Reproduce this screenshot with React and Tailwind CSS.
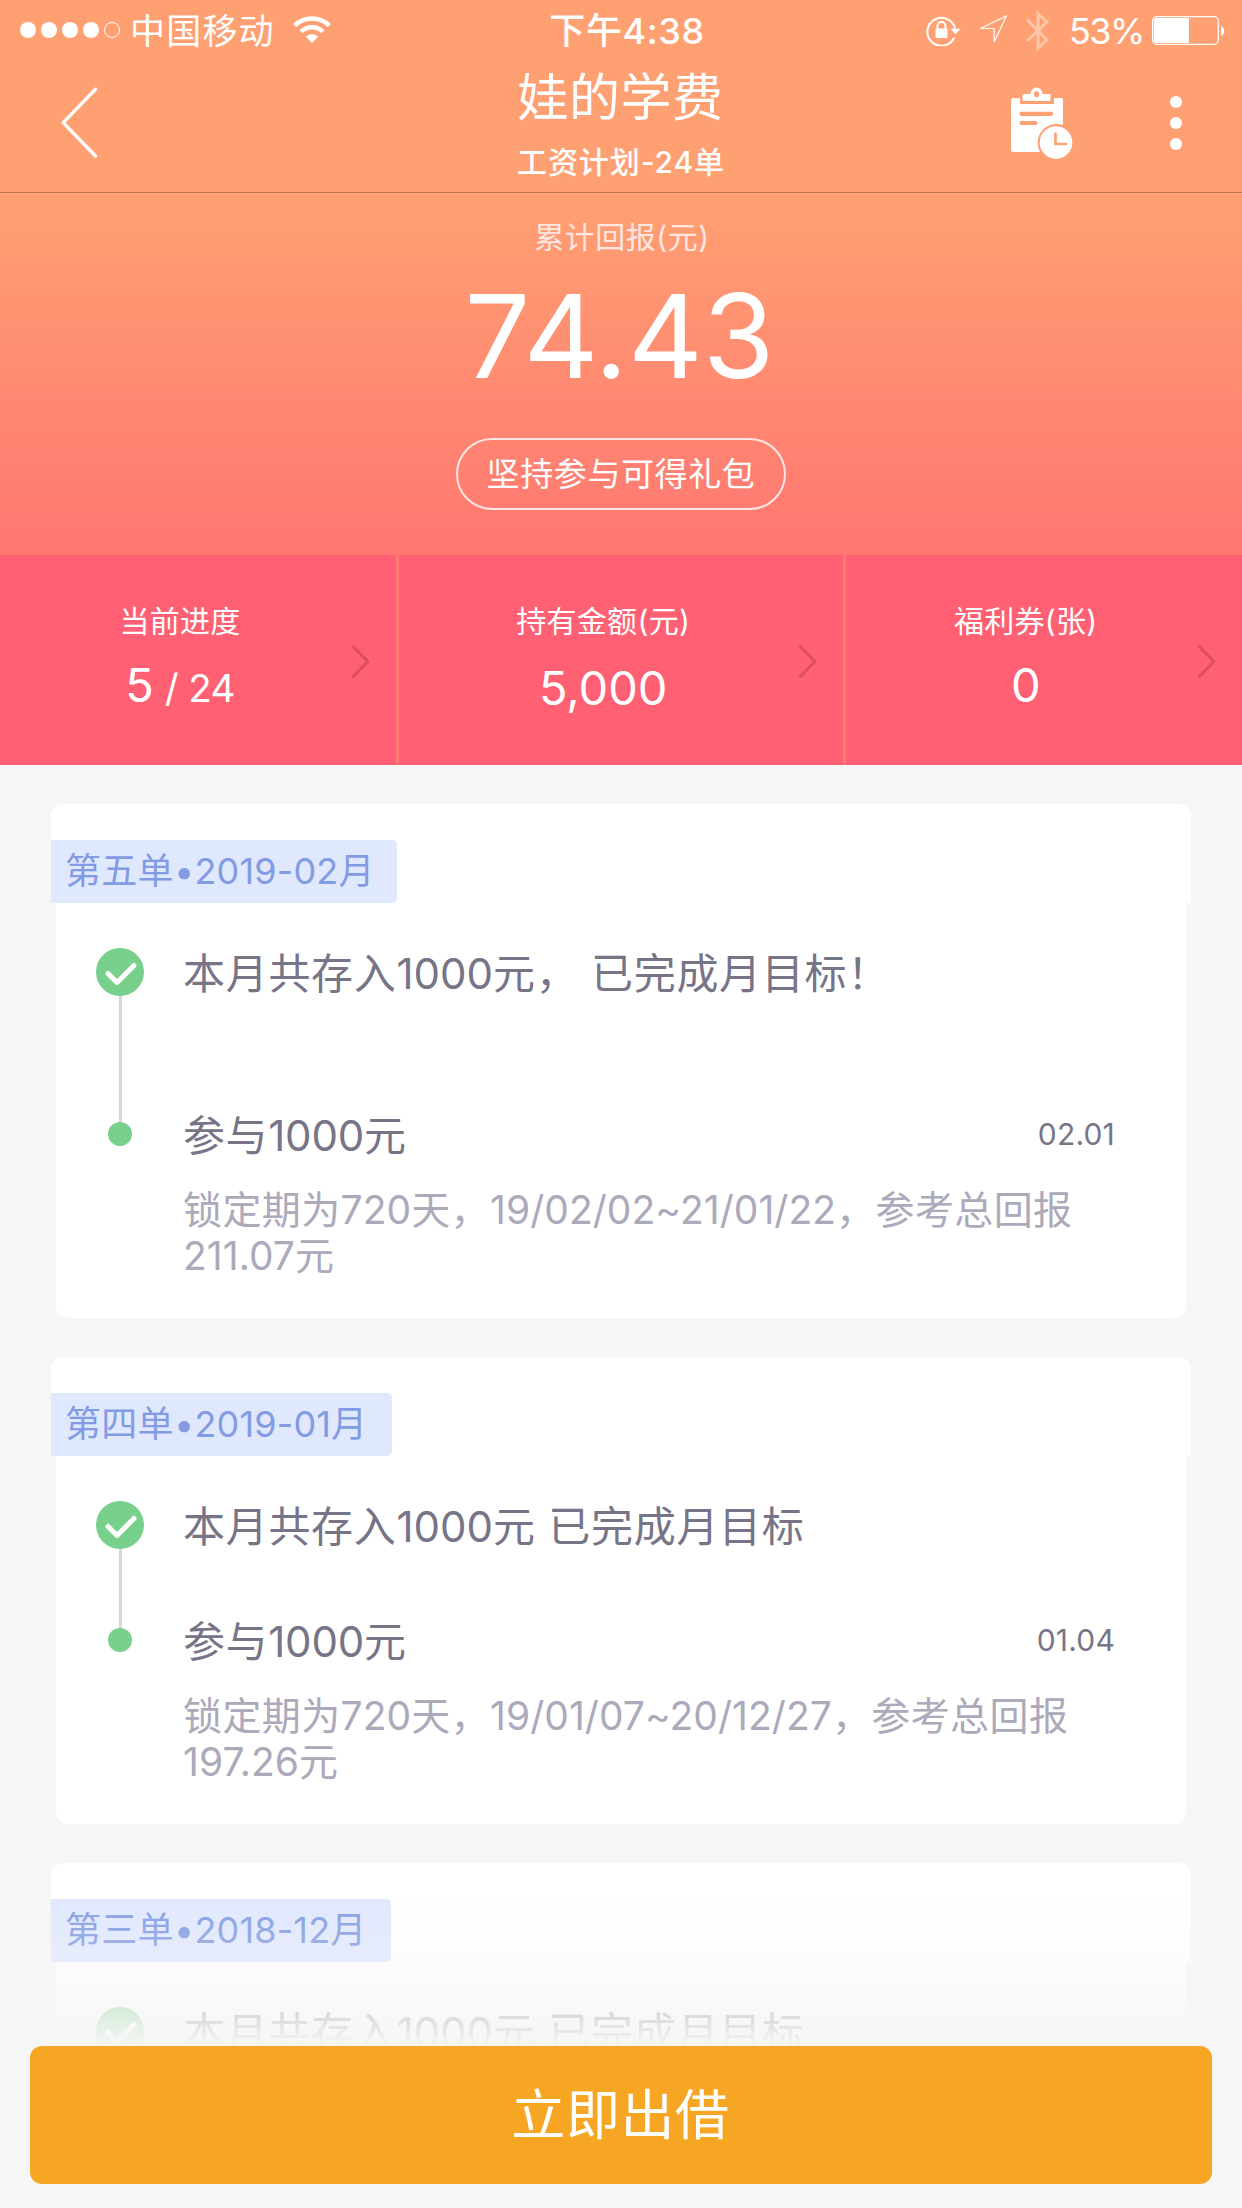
const FONT = "font-[Inter,'Noto_Sans_CJK_SC',sans-serif]";

// Sets runs of digits and their separators with their own letter spacing.
function Mixed({ text, digits }) {
  return text.split(/([0-9./~-]+)/).map((part, i) =>
    i % 2 ? (
      <span key={i} className={digits}>{part}</span>
    ) : (
      part
    )
  );
}

function StatusBar() {
  return (
    <div className="flex h-[60px] items-start text-white">
      <div className="flex w-[420px] items-start pl-5">
        <div className="mt-[22px] flex gap-[5px]">
          {[0, 1, 2, 3].map((i) => (
            <span key={i} className="size-4 rounded-full bg-white" />
          ))}
          <span className="size-4 rounded-full border border-white" />
        </div>
        <span className="mt-[6px] ml-[10px] h-[50px] text-[35px] leading-[50px] tracking-[1.2px] whitespace-nowrap">中国移动</span>
        <svg className="mt-[16px] ml-[18px]" width="38" height="28" viewBox="0 0 38 28" fill="none" stroke="#fff">
          <path d="M1.8 9.6 A24.5 24.5 0 0 1 36.2 9.6" strokeWidth="4.6" />
          <path d="M8 15.8 A15.7 15.7 0 0 1 30 15.8" strokeWidth="4.4" />
          <path d="M19 27 L12.9 20.8 A8.8 8.8 0 0 1 25.1 20.8 Z" fill="#fff" stroke="none" />
        </svg>
      </div>
      <div className="mt-[6px] h-[50px] flex-1 pl-[12px] text-center text-[36px] leading-[50px] font-medium tracking-[0.6px] whitespace-nowrap">下午4:38</div>
      <div className="flex w-[420px] items-start justify-end pr-[16px]">
        <svg className="mt-[14px]" width="35" height="32" viewBox="0 0 35 32">
          <path d="M28.2 23.5 A14 14 0 1 1 29 14.5" fill="none" stroke="#fff" strokeWidth="2" />
          <path d="M24.6 14.8 H34.4 L29.5 20.6 Z" fill="#fff" />
          <rect x="9.5" y="14.5" width="12" height="9.5" rx="1" fill="#fff" />
          <path d="M11.5 15 V12 a4 4 0 0 1 8 0 V15" fill="none" stroke="#fff" strokeWidth="2" />
        </svg>
        <svg className="mt-[14px] ml-[17px]" width="31" height="32" viewBox="0 0 31 32" fill="none" stroke="#fff" strokeWidth="1.2">
          <path d="M2.5 14.5 L28.3 2 L16.2 28 V14.5 Z" />
        </svg>
        <svg className="mt-[10px] ml-[17px] opacity-40" width="24" height="42" viewBox="0 0 24 42" fill="none" stroke="#fff" strokeWidth="3">
          <path d="M1 9.5 L21 30 L12 38 V3.5 L21 12 L1 31" />
        </svg>
        <span className="mt-[6px] ml-[19px] h-[50px] w-[75px] text-[36px] leading-[50px] tracking-[-1.6px] whitespace-nowrap">53%</span>
        <svg className="mt-[16px] ml-[8px]" width="74" height="30" viewBox="0 0 74 30">
          <rect x="0.7" y="0.7" width="65.6" height="27.6" rx="4" fill="none" stroke="#fff" strokeWidth="1.3" />
          <path d="M4.5 2 H37 V27 H4.5 a2.5 2.5 0 0 1 -2.5 -2.5 V4.5 A2.5 2.5 0 0 1 4.5 2 Z" fill="#fff" />
          <path d="M69 10 a5.5 5.5 0 0 1 0 10 Z" fill="#fff" />
        </svg>
      </div>
    </div>
  );
}

function NavBar() {
  return (
    <div className="flex h-[132px] text-white">
      <div className="w-[420px] pt-[26px] pl-[60px]">
        <svg width="40" height="74" viewBox="0 0 40 74" fill="none" stroke="#fff" strokeWidth="3.4" strokeLinecap="round" strokeLinejoin="round">
          <path d="M35.5 3.2 L3.2 36.6 L35.5 70" />
        </svg>
      </div>
      <div className="flex flex-1 flex-col items-center whitespace-nowrap">
        <div className="h-[74px] pt-[1px] pr-[1px] text-[51px] leading-[74px] tracking-[0.5px]">娃的学费</div>
        <div className="h-[56px] text-[30px] leading-[57px] font-medium tracking-[0.9px]">工资计划-24单</div>
      </div>
      <div className="flex w-[420px] items-start justify-end pr-[60px]">
        <svg className="mt-[26px]" width="64" height="76" viewBox="0 0 64 76">
          <path d="M2 12 H9 V18 H43 V12 H50 a2 2 0 0 1 2 2 V39 A19 19 0 0 0 29 66 H2 a2 2 0 0 1 -2 -2 V14 a2 2 0 0 1 2 -2 Z" fill="#fff" />
          <path d="M13 8 H19.5 A6 6.5 0 0 1 31.500 8 H39.500 V15 H11.500 V9.500 A1.500 1.500 0 0 1 13 8 Z M25.500 5 a2.600 3.200 0 1 0 0.010 0 Z" fill="#fff" fillRule="evenodd" />
          <path d="M10.500 27.800 H40 M10.500 37 H24.500" stroke="#ffa072" strokeWidth="4.200" strokeLinecap="round" />
          <circle cx="45" cy="56.500" r="16.300" fill="#fff" />
          <path d="M44.500 47.500 V58 H55" fill="none" stroke="#ffa072" strokeWidth="2.600" strokeLinecap="round" />
        </svg>
        <div className="mt-[36px] ml-[95px] flex flex-col gap-[9px]">
          <span className="size-3 rounded-full bg-white" />
          <span className="size-3 rounded-full bg-white" />
          <span className="size-3 rounded-full bg-white" />
        </div>
      </div>
    </div>
  );
}

function Hero() {
  return (
    <div className="flex h-[363px] flex-col items-center border-t border-[#b87350] bg-linear-to-b from-[#ffa072] to-[#ff7671] text-white">
      <div className="mt-[20px] h-[48px] pl-[2px] text-[30px] leading-[48px] tracking-[0.5px] whitespace-nowrap text-[#ffe6e2]">累计回报(元)</div>
      <div className="mt-[5px] h-[140px] pr-[3px] text-[116px] leading-[140px] whitespace-nowrap">74.43</div>
      <div className="mt-[32px] flex h-[72px] w-[330px] justify-center rounded-full border-2 border-white/80 text-[33px] leading-[68px] tracking-[0.6px] whitespace-nowrap">坚持参与可得礼包</div>
    </div>
  );
}

function Chevron({ className }) {
  return (
    <svg className={className} width="20" height="35" viewBox="0 0 20 35" fill="none" stroke="#df4d60" strokeWidth="3.2" strokeLinecap="round" strokeLinejoin="round">
      <path d="M2.500 2.300 L17.300 17.500 L2.500 32.700" />
    </svg>
  );
}

function Stat({ label, children, className, textClass, valueClass, chevronClass }) {
  return (
    <div className={`flex bg-[#ff6073] ${className}`}>
      <div className={`flex flex-col items-center whitespace-nowrap ${textClass}`}>
        <div className="mt-[42px] h-[48px] text-[30px] leading-[48px] tracking-[0.3px]">{label}</div>
        <div className={`flex items-baseline text-[47px] leading-[70px] ${valueClass}`}>{children}</div>
      </div>
      <Chevron className={`mt-[89px] ml-auto ${chevronClass}`} />
    </div>
  );
}

function Stats() {
  return (
    <div className="flex h-[210px] gap-[3px] bg-[#ff7a70] text-white">
      <Stat label="当前进度" className="w-[396px]" textClass="w-[362px] pl-[9px]" valueClass="mt-[5px]" chevronClass="mr-[25.500px]">
        <span>5</span>
        <span className="ml-[11px] text-[38.500px] tracking-[-0.6px]">/ 24</span>
      </Stat>
      <Stat label="持有金额(元)" className="w-[444px]" textClass="w-[408px] pl-[9px]" valueClass="mt-[8px]" chevronClass="mr-[25px]">
        <span>5,000</span>
      </Stat>
      <Stat label="福利券(张)" className="w-[396px]" textClass="w-[360px] pl-[8px]" valueClass="mt-[5px]" chevronClass="mr-[25px]">
        <span>0</span>
      </Stat>
    </div>
  );
}

function Check() {
  return (
    <svg className="shrink-0" width="48" height="48" viewBox="0 0 48 48">
      <circle cx="24" cy="24" r="24" fill="#77d08b" />
      <path d="M12 25.500 L21 34.500 L38 17.500" fill="none" stroke="#fff" strokeWidth="5" strokeLinecap="round" strokeLinejoin="round" />
    </svg>
  );
}

function Card({ tag, tagClass, goal, lineClass, bodyClass, entry }) {
  return (
    <div className="mx-[51px]">
      <div className="h-[99px] rounded-t-xl bg-white pt-9">
        <div className={`h-[63px] rounded-r-[5px] bg-[#e0e8fe] pl-[14px] text-[36px] leading-[63px] tracking-[0.3px] whitespace-nowrap text-[#829be2] ${tagClass}`}>
          <Mixed text={tag} digits="tracking-[0.15px]" />
        </div>
      </div>
      <div className={`mx-[5px] flex rounded-b-xl bg-white pt-[45px] pl-10 ${bodyClass}`}>
        <div className="flex w-12 flex-col items-center">
          <Check />
          <span className={`w-[3px] bg-[#d8d8d8] ${lineClass}`} />
          {entry && <span className="size-6 rounded-full bg-[#77d08b]" />}
        </div>
        <div className="ml-[39px] flex w-[932px] flex-col justify-start text-[42px] whitespace-nowrap text-[#777487]">
          <div className="h-[48px] leading-[51px] tracking-[0.7px] whitespace-pre">
            <Mixed text={goal} digits="tracking-[0px]" />
          </div>
          {entry && (
            <>
              <div className={lineClass} />
              <div className="flex h-6 items-center justify-between">
                <span className="pt-[3px] leading-[48px] tracking-[0.6px]">
                  <Mixed text={entry.title} digits="tracking-[-0.2px]" />
                </span>
                <span className="text-[30px] tracking-[0.2px]">{entry.date}</span>
              </div>
              <div className="mt-[41px] text-[39px] leading-[46px] tracking-[0.4px] text-[#aca9bb]">
                <div className="h-[46px]">
                  <Mixed text={entry.detail} digits="tracking-[0.05px]" />
                </div>
                <div className="h-[46px]">
                  <Mixed text={entry.total} digits="tracking-[0.05px]" />
                </div>
              </div>
            </>
          )}
        </div>
      </div>
    </div>
  );
}

const CARDS = [
  {
    tag: "第五单•2019-02月",
    tagClass: "w-[346px]",
    goal: "本月共存入1000元， 已完成月目标！",
    lineClass: "h-[126px]",
    bodyClass: "h-[415px]",
    entry: { title: "参与1000元", date: "02.01", detail: "锁定期为720天，19/02/02~21/01/22，参考总回报", total: "211.07元" },
  },
  {
    tag: "第四单•2019-01月",
    tagClass: "w-[341px]",
    goal: "本月共存入1000元 已完成月目标",
    lineClass: "h-[79px]",
    bodyClass: "h-[368px]",
    entry: { title: "参与1000元", date: "01.04", detail: "锁定期为720天，19/01/07~20/12/27，参考总回报", total: "197.26元" },
  },
  {
    tag: "第三单•2018-12月",
    tagClass: "w-[340px]",
    goal: "本月共存入1000元 已完成月目标",
    lineClass: "h-[79px]",
    bodyClass: "h-[246px]",
  },
];

export default function App() {
  return (
    <div className={`relative h-[2208px] w-[1242px] overflow-hidden bg-[#f6f6f6] ${FONT}`}>
      <div className="bg-[#ffa072]">
        <StatusBar />
        <NavBar />
      </div>
      <Hero />
      <Stats />
      <div className="flex flex-col gap-[39px] pt-[39px]">
        {CARDS.map((card) => (
          <Card key={card.tag} {...card} />
        ))}
      </div>
      <div className="absolute inset-x-0 bottom-0">
        <div className="h-[156px] bg-[linear-gradient(to_bottom,rgba(246,246,246,0)_0%,rgba(246,246,246,0.3)_46%,rgba(246,246,246,0.72)_75%,rgb(246,246,246)_100%)]" />
        <div className="h-[162px] bg-[#f6f6f6] px-[30px]">
          <button className="block h-[138px] w-full rounded-xl bg-[#f7a623] pr-[1px] text-center text-[54px] leading-[140px] tracking-[0.6px] text-white">立即出借</button>
        </div>
      </div>
    </div>
  );
}
